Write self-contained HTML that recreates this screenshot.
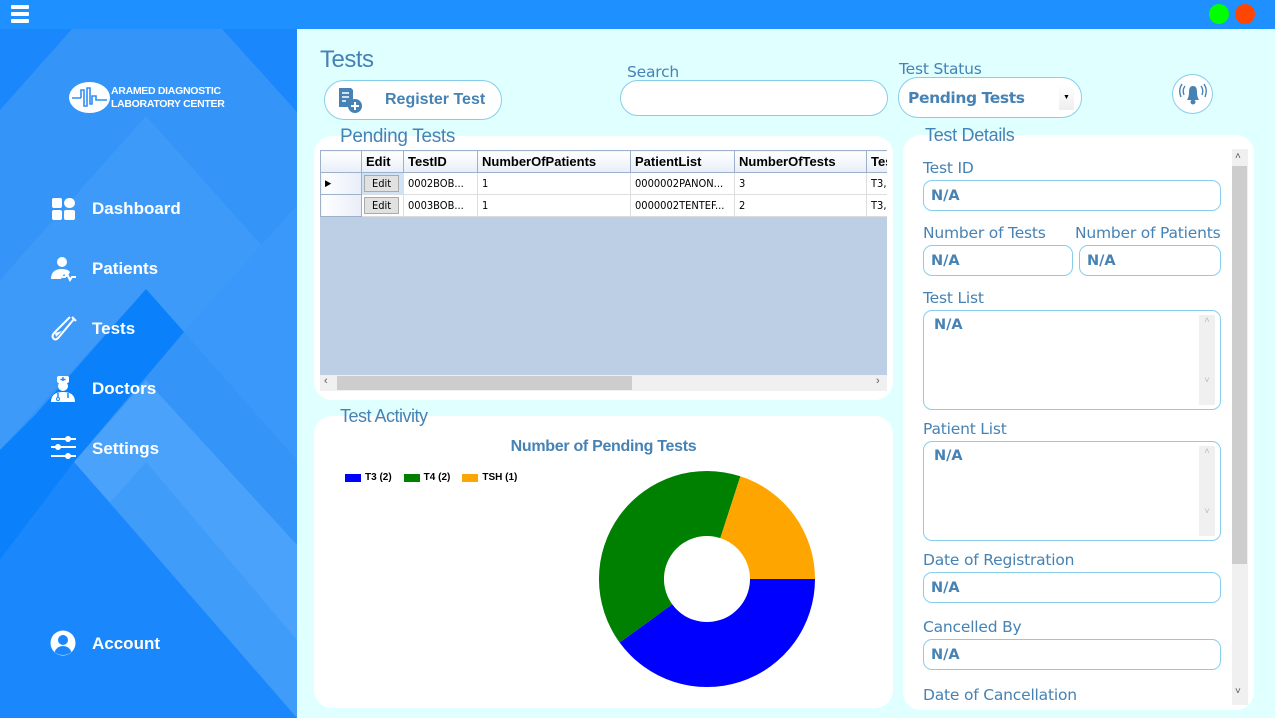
<!DOCTYPE html>
<html><head><meta charset="utf-8"><style>
*{margin:0;padding:0;box-sizing:border-box}
body{width:1275px;height:718px;overflow:hidden;background:#e0ffff;font-family:"Liberation Sans",sans-serif;position:relative}
.a{position:absolute}
.t{color:#4682b4}
.lbl{position:absolute;color:#4682b4;font-family:"DejaVu Sans","Liberation Sans",sans-serif;font-size:15.5px;letter-spacing:-0.2px}
.inp{position:absolute;background:#fff;border:1px solid #87ceeb;border-radius:9px;color:#4682b4;font-weight:bold;font-family:"DejaVu Sans",sans-serif;font-size:14.5px;padding:7px 0 0 7px}
.nav{position:absolute;left:92px;color:#fff;font-family:"Liberation Sans",sans-serif;font-weight:bold;font-size:17px}
table{border-collapse:collapse;font-size:12px}
td{border:1px solid #ddd;height:22px;padding:0 4px;white-space:nowrap;overflow:hidden;font-family:"DejaVu Sans Condensed","Liberation Sans Narrow",sans-serif;font-size:11px}
.hd td{background:linear-gradient(#fff,#e8eef8);border-color:#9db0cc;font-weight:bold;font-family:"Liberation Sans",sans-serif;font-size:13px;color:#000}
.eb{display:inline-block;border:1px solid #aaa;background:#e1e1e1;padding:1px 7px;font-size:11px}
.vs{position:absolute;background:#f0f0f0;width:16px;color:#bbb;font-size:9px;text-align:center}
</style></head><body>
<div class="a" style="left:0;top:0;width:1275px;height:29px;background:#1e90ff"></div>
<div class="a" style="left:11px;top:5px;width:18px;height:3.5px;background:#fff;border-radius:1px;box-shadow:0 7px 0 #fff,0 14px 0 #fff"></div>
<div class="a" style="left:1209px;top:4px;width:20px;height:20px;border-radius:50%;background:#0f0"></div>
<div class="a" style="left:1235px;top:4px;width:20px;height:20px;border-radius:50%;background:#ff4500"></div>
<svg class="a" style="left:0;top:29px" width="297" height="689" viewBox="0 29 297 689">
<rect x="0" y="29" width="297" height="689" fill="#1a88fc"/>
<polygon points="0,110 72,29 222,29 297,112 297,718 0,718" fill="#3594f8"/>
<polygon points="0,280 146,116 297,285 297,460 146,289 0,450" fill="#3d9af9"/>
<polygon points="35,415 146,289 184,332 74,462 0,560 0,450" fill="#0a80fb"/>
<polygon points="184,332 297,205 297,460" fill="#3a98fa"/>
<polygon points="74,462 146,380 297,545 297,718" fill="#4aa2fb"/>
<polygon points="110,503 146,462 297,640 297,718 270,718" fill="#3f9cf9"/>
<polygon points="0,560 74,462 110,503 297,718 0,718" fill="#1a88fc"/>
</svg>
<div class="a" style="left:69px;top:82px;width:41px;height:31px;border-radius:50%;background:#fff"></div>
<svg class="a" style="left:69px;top:82px" width="41" height="31"><path d="M3 16H12M12 16V8H15V24H18V6H21V22H23V14H27V18H38" stroke="#2f8ff5" stroke-width="1.6" fill="none"/></svg>
<div class="a" style="left:111px;top:85px;color:#fff;font-weight:bold;font-size:10.5px;line-height:12.5px;letter-spacing:-0.3px">ARAMED DIAGNOSTIC<br>LABORATORY CENTER</div>
<svg class="a" style="left:51px;top:197px" width="26" height="24"><rect x="1" y="1" width="10" height="10" rx="2" fill="#fff"/><rect x="13" y="1" width="11" height="10" rx="5" fill="#fff"/><rect x="1" y="13" width="10" height="10" rx="2" fill="#fff"/><rect x="13" y="13" width="11" height="10" rx="2" fill="#fff"/></svg>
<div class="nav" style="top:199px">Dashboard</div>
<svg class="a" style="left:50px;top:255px" width="28" height="28"><circle cx="12" cy="7" r="5" fill="#fff"/><path d="M1 24Q1 14 12 14Q18 14 20 17L17 22L14 19L11 24Z" fill="#fff"/><path d="M12 22H15L17 19L20 25L22 22H26" stroke="#fff" stroke-width="2" fill="none"/></svg>
<div class="nav" style="top:259px">Patients</div>
<svg class="a" style="left:50px;top:314px" width="28" height="30"><path d="M22 3L26 7M24 5L9 23Q6 27 3.5 24.5Q1 22 5 18L20 3" stroke="#fff" stroke-width="2" fill="none"/><path d="M5 19L12 17L6 23Z" fill="#fff"/></svg>
<div class="nav" style="top:319px">Tests</div>
<svg class="a" style="left:50px;top:375px" width="28" height="28"><rect x="7" y="1" width="12" height="7" rx="2" fill="#fff"/><path d="M13 2V7M10.5 4.5H15.5" stroke="#1a88fc" stroke-width="1.4"/><circle cx="13" cy="11" r="5" fill="#fff"/><path d="M1 27Q1 17 13 17Q25 17 25 27Z" fill="#fff"/><path d="M8 18V23M18 18V23" stroke="#1a88fc" stroke-width="1.5"/><circle cx="8" cy="24" r="1.5" fill="none" stroke="#1a88fc"/></svg>
<div class="nav" style="top:379px">Doctors</div>
<svg class="a" style="left:50px;top:435px" width="28" height="26"><path d="M1 4H26M1 12H26M1 21H26" stroke="#fff" stroke-width="2"/><circle cx="18" cy="4" r="3" fill="#fff"/><circle cx="8" cy="12" r="3" fill="#fff"/><circle cx="18" cy="21" r="3" fill="#fff"/></svg>
<div class="nav" style="top:439px">Settings</div>
<svg class="a" style="left:50px;top:630px" width="27" height="27"><circle cx="13" cy="13" r="12.5" fill="#fff"/><circle cx="13" cy="10" r="5" fill="#1a88fc"/><path d="M4.5 22Q7 16 13 16Q19 16 21.5 22Q18 25 13 25Q8 25 4.5 22Z" fill="#1a88fc"/></svg>
<div class="nav" style="top:634px">Account</div>
<div class="a t" style="left:320px;top:46px;font-size:24px;letter-spacing:-0.5px">Tests</div>
<div class="a" style="left:324px;top:80px;width:178px;height:40px;border:1px solid #87ceeb;border-radius:20px;background:#fff"></div>
<svg class="a" style="left:336px;top:86px" width="28" height="28"><path d="M3 2H15L17 4V14Q13 16 12 21H3Z" fill="#4682b4"/><path d="M6 7H13M6 11H13M6 15H10" stroke="#fff" stroke-width="1.5"/><circle cx="19" cy="20" r="7" fill="#4682b4"/><path d="M19 16V24M15 20H23" stroke="#fff" stroke-width="2"/></svg>
<div class="a t" style="left:385px;top:91px;font-weight:bold;font-size:16px">Register Test</div>
<div class="lbl" style="left:627px;top:63px">Search</div>
<div class="a" style="left:620px;top:80px;width:268px;height:36px;border:1px solid #87ceeb;border-radius:18px;background:#fff"></div>
<div class="lbl" style="left:899px;top:60px">Test Status</div>
<div class="a" style="left:898px;top:77px;width:184px;height:41px;border:1px solid #87ceeb;border-radius:20px;background:#fff"></div>
<div class="a t" style="left:908px;top:89px;font-family:'DejaVu Sans',sans-serif;font-weight:bold;font-size:15.5px;letter-spacing:-0.4px">Pending Tests</div>
<div class="a" style="left:1059px;top:85px;width:15px;height:25px;background:linear-gradient(#fff,#eee);font-size:7px;text-align:center;line-height:25px">▼</div>
<div class="a" style="left:1172px;top:74px;width:41px;height:40px;border:1px solid #87ceeb;border-radius:50%;background:#fff"></div>
<svg class="a" style="left:1177px;top:80px" width="32" height="28"><path d="M10 20Q12 17 12 12Q12 6 16 6Q20 6 20 12Q20 17 22 20Z" fill="#4682b4"/><circle cx="16" cy="22" r="2.5" fill="#4682b4"/><path d="M8 6Q5 10 7 15M5 4Q1 10 4 17M24 6Q27 10 25 15M27 4Q31 10 28 17" stroke="#4682b4" stroke-width="1.4" fill="none"/></svg>
<div class="a" style="left:314px;top:136px;width:579px;height:264px;background:#fff;border-radius:18px"></div>
<div class="a t" style="left:340px;top:126px;font-size:19px;letter-spacing:-0.3px">Pending Tests</div>
<div class="a" style="left:320px;top:150px;width:567px;height:241px;background:#bccfe5;overflow:hidden">
<table style="width:595px;table-layout:fixed">
<colgroup><col style="width:41px"><col style="width:42px"><col style="width:74px"><col style="width:153px"><col style="width:104px"><col style="width:132px"><col style="width:49px"></colgroup>
<tr class="hd"><td></td><td>Edit</td><td>TestID</td><td>NumberOfPatients</td><td>PatientList</td><td>NumberOfTests</td><td>Test</td></tr>
<tr style="background:#fff"><td style="background:linear-gradient(90deg,#fff,#e8eef8);border-color:#9db0cc;font-size:9px">▶</td><td style="background:#cfe3f7;padding:0 2px"><span class="eb">Edit</span></td><td>0002BOB...</td><td>1</td><td>0000002PANON...</td><td>3</td><td>T3,</td></tr>
<tr style="background:#fff"><td style="background:linear-gradient(90deg,#fff,#e8eef8);border-color:#9db0cc"></td><td style="padding:0 2px"><span class="eb">Edit</span></td><td>0003BOB...</td><td>1</td><td>0000002TENTEF...</td><td>2</td><td>T3,</td></tr>
</table>
<div class="a" style="left:0;top:225px;width:567px;height:16px;background:#f0f0f0"></div>
<div class="a" style="left:17px;top:226px;width:295px;height:14px;background:#cdcdcd"></div>
<div class="a" style="left:4px;top:225px;font-size:11px;color:#555">‹</div>
<div class="a" style="left:556px;top:225px;font-size:11px;color:#555">›</div>
</div>
<div class="a" style="left:314px;top:416px;width:579px;height:292px;background:#fff;border-radius:18px"></div>
<div class="a t" style="left:340px;top:406px;font-size:18px;letter-spacing:-0.5px">Test Activity</div>
<div class="a" style="left:314px;top:438px;width:579px;text-align:center;color:#4682b4;font-weight:bold;font-size:16px;letter-spacing:-0.3px">Number of Pending Tests</div>
<div class="a" style="left:345px;top:472px;font-size:10px;font-weight:bold;color:#000;display:flex;align-items:center">
<span style="display:inline-block;width:16px;height:8px;background:#00f;margin-right:4px"></span>T3 (2)
<span style="display:inline-block;width:16px;height:8px;background:green;margin:0 4px 0 12px"></span>T4 (2)
<span style="display:inline-block;width:16px;height:8px;background:orange;margin:0 4px 0 12px"></span>TSH (1)</div>
<svg class="a" style="left:0;top:0" width="1275" height="718">
<path d="M815 579A108 108 0 0 1 619.6 642.5L672.2 604.3A43 43 0 0 0 750 579Z" fill="#00f"/>
<path d="M619.6 642.5A108 108 0 0 1 740.4 476.3L720.3 538.1A43 43 0 0 0 672.2 604.3Z" fill="green"/>
<path d="M740.4 476.3A108 108 0 0 1 815 579L750 579A43 43 0 0 0 720.3 538.1Z" fill="orange"/>
</svg>
<div class="a" style="left:903px;top:135px;width:351px;height:575px;background:#fff;border-radius:18px"></div>
<div class="a t" style="left:925px;top:125px;font-size:18px;letter-spacing:-0.3px">Test Details</div>
<div class="vs" style="left:1232px;top:149px;height:556px"></div>
<div class="a" style="left:1232px;top:166px;width:15px;height:398px;background:#cdcdcd"></div>
<div class="a" style="left:1235px;top:151px;font-size:10px;color:#555">˄</div>
<div class="a" style="left:1235px;top:686px;font-size:10px;color:#555">˅</div>
<div class="lbl" style="left:923px;top:159px">Test ID</div>
<div class="inp" style="left:923px;top:180px;width:298px;height:31px">N/A</div>
<div class="lbl" style="left:923px;top:224px">Number of Tests</div>
<div class="lbl" style="left:1075px;top:224px">Number of Patients</div>
<div class="inp" style="left:923px;top:245px;width:150px;height:31px">N/A</div>
<div class="inp" style="left:1079px;top:245px;width:142px;height:31px">N/A</div>
<div class="lbl" style="left:923px;top:289px">Test List</div>
<div class="inp" style="left:923px;top:310px;width:298px;height:100px;padding:6px 0 0 10px">N/A</div>
<div class="vs" style="left:1199px;top:315px;height:90px">˄<br><br><br><br><br><br>˅</div>
<div class="lbl" style="left:923px;top:420px">Patient List</div>
<div class="inp" style="left:923px;top:441px;width:298px;height:100px;padding:6px 0 0 10px">N/A</div>
<div class="vs" style="left:1199px;top:446px;height:90px">˄<br><br><br><br><br><br>˅</div>
<div class="lbl" style="left:923px;top:551px">Date of Registration</div>
<div class="inp" style="left:923px;top:572px;width:298px;height:31px">N/A</div>
<div class="lbl" style="left:923px;top:618px">Cancelled By</div>
<div class="inp" style="left:923px;top:639px;width:298px;height:31px">N/A</div>
<div class="lbl" style="left:923px;top:686px">Date of Cancellation</div>
</body></html>
